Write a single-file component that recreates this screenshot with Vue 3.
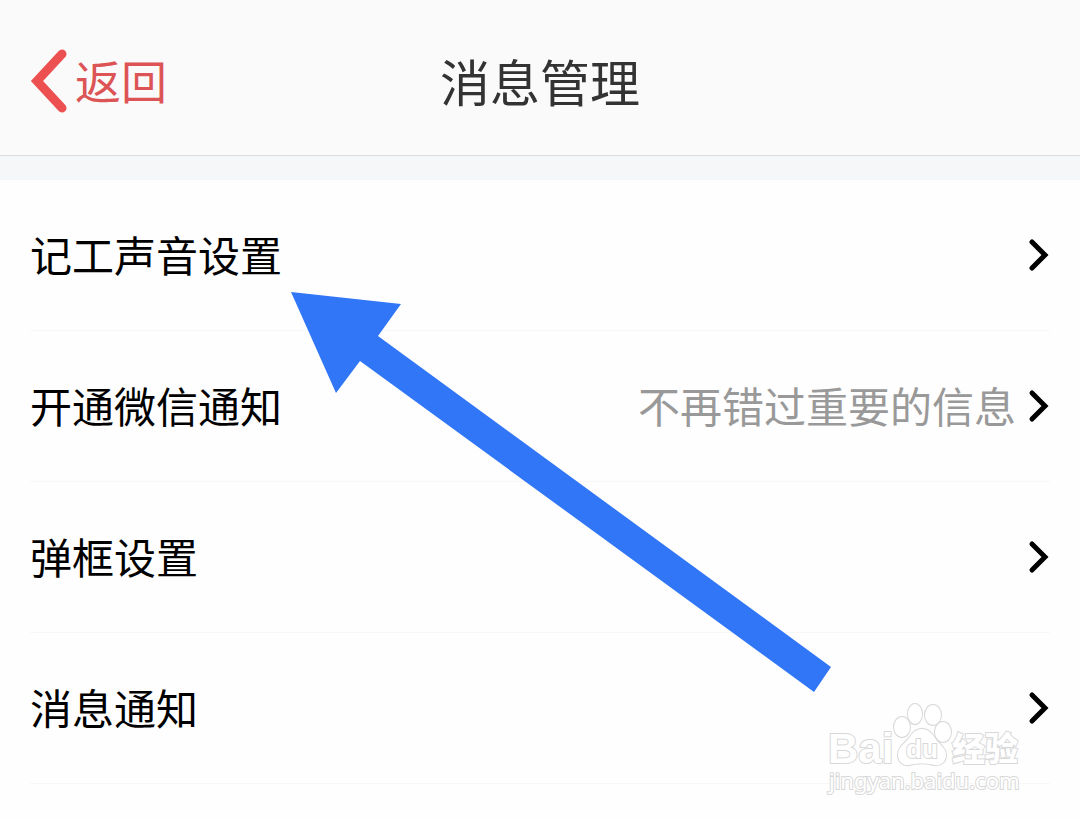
<script setup>
const rows = [
  { label: '记工声音设置', note: '' },
  { label: '开通微信通知', note: '不再错过重要的信息' },
  { label: '弹框设置', note: '' },
  { label: '消息通知', note: '' },
]
</script>

<template>
  <div class="page">
    <header class="bar">
      <button type="button" class="back">
        <svg class="back-icon" width="38" height="64" viewBox="0 0 38 64" aria-hidden="true">
          <path d="M32 5 L7 32 L32 59" />
        </svg>
        <span class="back-text">返回</span>
      </button>
      <h1 class="title">消息管理</h1>
    </header>

    <main class="content">
      <ul class="list">
        <li v-for="row in rows" :key="row.label">
          <button type="button" class="row">
            <span class="label">{{ row.label }}</span>
            <span class="note">{{ row.note }}</span>
            <svg class="chevron" width="20" height="32" viewBox="0 0 20 32" aria-hidden="true">
              <path d="M2 3 L15 16 L2 29" />
            </svg>
          </button>
        </li>
      </ul>
    </main>

    <svg class="pointer" width="542" height="402" viewBox="0 0 542 402" aria-hidden="true">
      <path d="M1 0 L111 12 L88 44 L541 375 L524 400 L70 69 L46 101 Z" />
    </svg>

    <svg class="watermark" width="200" height="100" viewBox="0 0 200 100" aria-label="Baidu 经验">
      <text class="brand" x="3" y="62">Bai</text>
      <ellipse cx="77" cy="26" rx="8" ry="10" />
      <ellipse cx="90" cy="13" rx="7" ry="10" />
      <ellipse cx="108" cy="14" rx="8" ry="10" />
      <ellipse cx="118" cy="31" rx="8" ry="10" />
      <path d="M97 28 C91 28 87 32 84 37 C81 42 73 45 73 54 C73 61 78 65 84 64 C92 62 102 62 109 64 C117 65 121 60 121 54 C121 46 113 43 110 37 C107 32 103 28 97 28 Z" />
      <text class="inner" x="81" y="57">du</text>
      <text class="cjk" x="127" y="60">经验</text>
      <text class="site" x="4" y="88">jingyan.baidu.com</text>
    </svg>
  </div>
</template>

<style>
body {
  margin: 0;
  background: #fefefe;
}
</style>

<style scoped>
.page {
  position: relative;
  min-height: 100vh;
  overflow: hidden;
  background: #fefefe;
  font-family: "Noto Sans CJK SC", sans-serif;
}

.bar {
  box-sizing: border-box;
  display: grid;
  grid-template-columns: 1fr auto 1fr;
  align-items: center;
  height: 156px;
  padding: 6px 30px 0;
  background: #fafafa;
  border-bottom: 1px solid #dcdcdc;
}

.back {
  display: flex;
  align-items: center;
  justify-self: start;
  gap: 7px;
  padding: 0;
  border: 0;
  background: none;
  color: #dc5455;
  font-family: inherit;
  font-size: 46px;
  font-weight: 400;
  line-height: 60px;
}

.back-text {
  padding-bottom: 4px;
}

.back-icon path {
  fill: none;
  stroke: #ec5051;
  stroke-width: 9;
  stroke-linecap: round;
  stroke-linejoin: miter;
}

.title {
  margin: 0;
  padding-bottom: 2px;
  color: #333;
  font-size: 50px;
  font-weight: 400;
  line-height: 64px;
}

.content {
  border-top: 24px solid #f6f7f9;
}

.list {
  margin: 0;
  padding: 0 30px;
  list-style: none;
}

.row {
  box-sizing: border-box;
  display: flex;
  align-items: center;
  width: 100%;
  height: 151px;
  padding: 0;
  border: 0;
  border-bottom: 1px solid #f7f7f7;
  background: none;
  color: #000;
  font-family: inherit;
  font-size: 42px;
  font-weight: 400;
  line-height: 60px;
  text-align: left;
}

.label {
  flex: 1;
  padding-bottom: 2px;
}

.note {
  margin-right: 14px;
  padding-bottom: 2px;
  color: #999;
}

.chevron {
  overflow: visible;
}

.chevron path {
  fill: none;
  stroke: #000;
  stroke-width: 5;
  stroke-linecap: round;
  stroke-linejoin: miter;
}

.pointer {
  position: absolute;
  top: 292px;
  left: 290px;
  fill: #3076f6;
  pointer-events: none;
}

.watermark {
  position: absolute;
  top: 701px;
  left: 825px;
  fill: #fff;
  stroke: #d8d8d8;
  stroke-width: 2;
  paint-order: stroke;
  pointer-events: none;
}

.brand {
  font: bold 42px "Liberation Sans", sans-serif;
}

.inner {
  font: bold 26px "Liberation Sans", sans-serif;
}

.cjk {
  font: 900 33px "Noto Sans CJK SC", sans-serif;
}

.site {
  font: 22px "Noto Sans", sans-serif;
}
</style>
